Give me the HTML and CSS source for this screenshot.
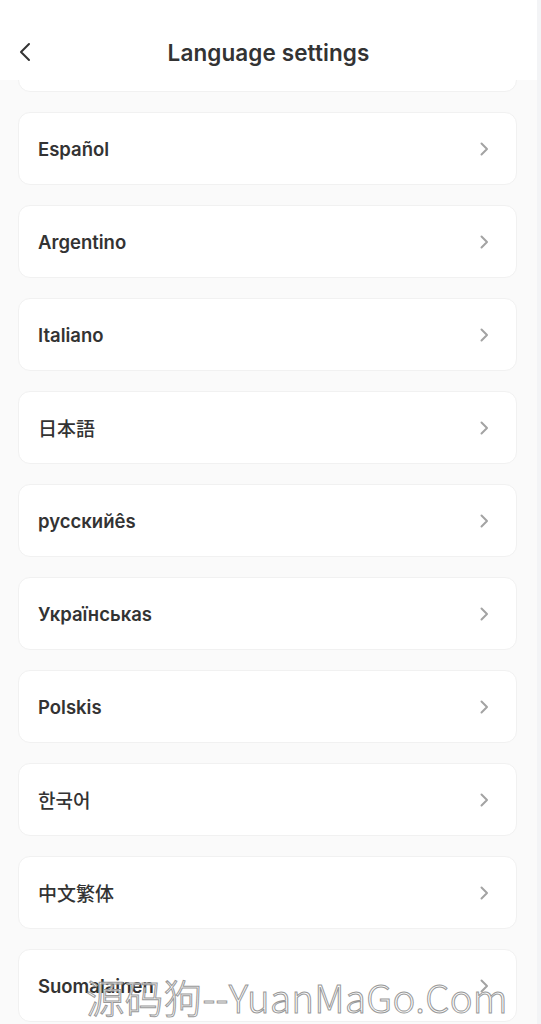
FILE: index.html
```html
<!DOCTYPE html>
<html lang="en">
<head>
  <meta charset="UTF-8">
  <title>Language settings</title>
  <link rel="stylesheet" href="styles.css">
</head>
<body>
  <div class="page">
    <header class="topbar">
      <button class="back" aria-label="Back">
        <svg width="14" height="20" viewBox="0 0 14 20"><path d="M11 2 L3 10 L11 18" fill="none" stroke="#333" stroke-width="2" stroke-linecap="round" stroke-linejoin="round"/></svg>
      </button>
      <h1>Language settings</h1>
    </header>

    <ul class="lang-list">
      <li class="lang-item"><span>English</span><i class="arrow"></i></li>
      <li class="lang-item"><span>Español</span><i class="arrow"></i></li>
      <li class="lang-item"><span>Argentino</span><i class="arrow"></i></li>
      <li class="lang-item"><span>Italiano</span><i class="arrow"></i></li>
      <li class="lang-item"><span lang="ja" class="cjk">日本語</span><i class="arrow"></i></li>
      <li class="lang-item"><span>русскийês</span><i class="arrow"></i></li>
      <li class="lang-item"><span>Українськаs</span><i class="arrow"></i></li>
      <li class="lang-item"><span>Polskis</span><i class="arrow"></i></li>
      <li class="lang-item"><span lang="ko" class="cjk">한국어</span><i class="arrow"></i></li>
      <li class="lang-item"><span lang="zh-Hant" class="cjk">中文繁体</span><i class="arrow"></i></li>
      <li class="lang-item"><span>Suomalainen</span><i class="arrow"></i></li>
    </ul>

    <div class="watermark">源码狗--YuanMaGo.Com</div>
  </div>

  <script>
    // put the same chevron in every row
    const chevron = '<svg width="10" height="16" viewBox="0 0 10 16"><path d="M2.5 2.5 L8 8 L2.5 13.5" fill="none" stroke="#a3a3a3" stroke-width="2" stroke-linecap="round" stroke-linejoin="round"/></svg>';
    document.querySelectorAll('.arrow').forEach(el => { el.innerHTML = chevron; });
  </script>
</body>
</html>
```

FILE: styles.css
```css
html, body {
  margin: 0;
  padding: 0;
  height: 1024px;
  overflow: hidden;
}
body {
  font-family: Inter, "Noto Sans CJK SC", "Noto Sans CJK JP", "Noto Sans CJK KR", sans-serif;
  background: #fafafa;
  color: #333;
}
.page {
  position: relative;
  height: 1024px;
  border-right: 4px solid #f3f4f6;
  box-sizing: border-box;
}
.topbar {
  position: absolute;
  top: 0;
  left: 0;
  right: 0;
  height: 80px;
  background: #fff;
  display: flex;
  align-items: center;
  justify-content: center;
  z-index: 2;
}
.topbar h1 {
  margin: 24px 0 0;
  font-size: 22.5px;
  font-weight: 600;
  color: #333;
  letter-spacing: 0.1px;
}
.back {
  position: absolute;
  left: 14px;
  top: 42px;
  padding: 0 4px;
  border: none;
  background: none;
  cursor: pointer;
}
.lang-list {
  list-style: none;
  margin: 0;
  padding: 19px 20px 0 18px;
  display: flex;
  flex-direction: column;
  gap: 20px;
}
.lang-item {
  height: 73px;
  box-sizing: border-box;
  background: #fff;
  border: 1px solid #f1f1f1;
  border-radius: 12px;
  display: flex;
  align-items: center;
  justify-content: space-between;
  padding: 0 27px 0 19px;
  font-size: 18.5px;
  font-weight: 600;
  color: #333;
}
.lang-item .cjk {
  font-weight: 500;
  font-size: 19px;
}
.arrow {
  display: flex;
  align-items: center;
}
.watermark {
  position: absolute;
  left: 86px;
  bottom: 0;
  font-family: "Noto Sans CJK SC", sans-serif;
  font-size: 38.5px;
  font-weight: 300;
  color: rgba(255, 255, 255, 0.7);
  -webkit-text-stroke: 1px #999;
  letter-spacing: 0.3px;
  z-index: 3;
  white-space: nowrap;
}
```
